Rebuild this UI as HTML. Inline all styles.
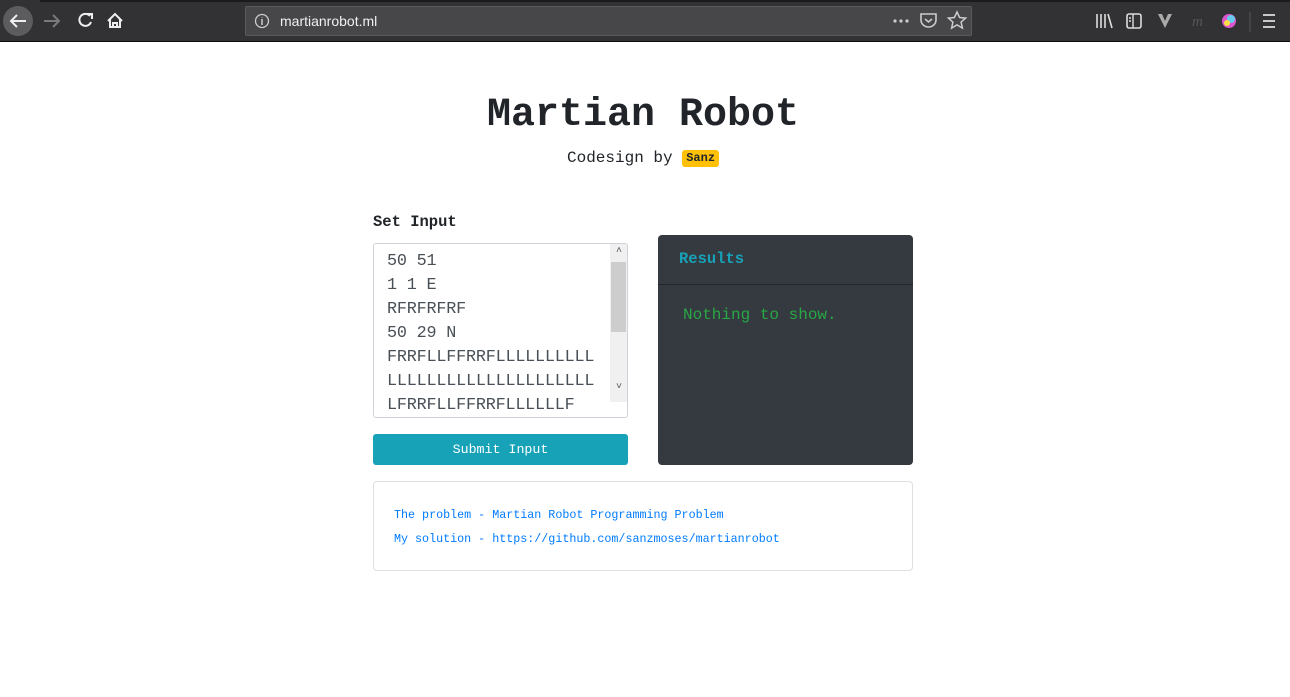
<!DOCTYPE html>
<html><head><meta charset="utf-8"><style>
*{box-sizing:border-box;margin:0;padding:0}
body{width:1290px;height:697px;overflow:hidden;background:#fff;font-family:"Liberation Mono",monospace;position:relative}
.bar{position:absolute;left:0;top:0;width:1290px;height:42px;background:#323234;border-bottom:1px solid #0c0c0d}
.tabline{position:absolute;top:0;height:2px;background:#1b1b1c}
.url{position:absolute;left:245px;top:6px;width:727px;height:30px;background:#474749;border:1px solid #5a5a5c;border-radius:2px;color:#f0f0f0;font-family:"Liberation Sans",sans-serif;font-size:14px;line-height:28px;padding-left:34px}
.ic{position:absolute}
.a{position:absolute;white-space:pre}
</style></head><body>
<div class="bar">
 <div class="tabline" style="left:40px;width:1250px"></div>
 <svg class="ic" style="left:0;top:0" width="300" height="42">
  <circle cx="18" cy="21" r="15" fill="#5c5c5e"/>
  <path d="M26 21H11M17 15l-6 6 6 6" stroke="#eee" stroke-width="2" fill="none"/>
  <path d="M59 21H44M53 15l6 6-6 6" stroke="#7a7a7c" stroke-width="2" fill="none"/>
  <path d="M90 16a6 6 0 1 0 1 6" stroke="#eee" stroke-width="2" fill="none"/><path d="M86 14h6v5" stroke="#eee" stroke-width="2" fill="none"/>
  <path d="M108 21l7-7 7 7M110 19v8h10v-8M113 27v-4h4v4" stroke="#eee" stroke-width="2" fill="none"/>
 </svg>
 <div class="url">martianrobot.ml</div>
 <svg class="ic" style="left:0;top:0" width="1290" height="42">
  <circle cx="262" cy="21" r="6.5" stroke="#ccc" stroke-width="1.3" fill="none"/><path d="M262 19v6M262 17v.5" stroke="#ccc" stroke-width="1.5"/>
  <circle cx="895" cy="21" r="1.6" fill="#ccc"/><circle cx="901" cy="21" r="1.6" fill="#ccc"/><circle cx="907" cy="21" r="1.6" fill="#ccc"/>
  <path d="M921 14h15v6a7.5 7 0 0 1-15 0z" stroke="#ccc" stroke-width="1.6" fill="none"/><path d="M925 19l3.5 3 3.5-3" stroke="#ccc" stroke-width="1.6" fill="none"/>
  <path d="M957 12l2.6 5.5 6 .6-4.5 4 1.3 6-5.4-3.2-5.4 3.2 1.3-6-4.5-4 6-.6z" stroke="#ccc" stroke-width="1.5" fill="none"/>
  <path d="M1097 14v14M1101 14v14M1105 14v14M1108 14l4 14" stroke="#ddd" stroke-width="1.6"/>
  <rect x="1127" y="14" width="14" height="14" rx="2" stroke="#ddd" stroke-width="1.6" fill="none"/><path d="M1133 14v14M1129 18h2M1129 21h2" stroke="#ddd" stroke-width="1.4"/>
  <path d="M1158 14l7 14 7-14h-4l-3 7-3-7z" fill="#aaa"/>
  <text x="1192" y="26" font-family="Liberation Serif" font-style="italic" font-size="15" fill="#555">m</text>
  <circle cx="1229" cy="21" r="7" fill="#d5c"/><circle cx="1231" cy="19" r="4" fill="#6ce"/><circle cx="1227" cy="23" r="3" fill="#fd4"/>
  <path d="M1250 12v20" stroke="#555" stroke-width="1"/>
  <path d="M1263 15h12M1263 21h12M1263 27h12" stroke="#ddd" stroke-width="1.8"/>
 </svg>
</div>
<div class="a" style="left:0;width:1286px;top:93px;text-align:center;font-size:40px;font-weight:bold;color:#212529;line-height:46px">Martian Robot</div>
<div class="a" style="left:567px;top:148px;font-size:16px;color:#212529;line-height:20px">Codesign by <span style="display:inline-block;background:#ffc107;border-radius:3px;font-size:12px;font-weight:bold;padding:0 4px;line-height:17px;vertical-align:1px">Sanz</span></div>
<div class="a" style="left:373px;top:213px;font-size:15.5px;font-weight:bold;color:#212529">Set Input</div>
<div style="position:absolute;left:373px;top:243px;width:255px;height:175px;border:1px solid #ced4da;border-radius:3px;overflow:hidden">
 <div style="position:absolute;left:13px;top:6px;font-size:16.8px;line-height:24px;color:#495057;white-space:pre;letter-spacing:-.2px">50 51
1 1 E
RFRFRFRF
50 29 N
FRRFLLFFRRFLLLLLLLLLL
LLLLLLLLLLLLLLLLLLLLL
LFRRFLLFFRRFLLLLLLF</div>
 <div style="position:absolute;right:0;top:0;width:17px;height:158px;background:#f0f0f0"></div>
 <div style="position:absolute;right:1px;top:18px;width:15px;height:70px;background:#cdcdcd"></div>
 <div style="position:absolute;right:5px;top:2px;font-size:10px;color:#555">&#708;</div>
 <div style="position:absolute;right:5px;top:138px;font-size:10px;color:#555">&#709;</div>
</div>
<div style="position:absolute;left:373px;top:434px;width:255px;height:31px;background:#17a2b8;border-radius:3px;color:#fff;font-size:13.3px;text-align:center;line-height:31px">Submit Input</div>
<div style="position:absolute;left:658px;top:235px;width:255px;height:230px;background:#343a40;border-radius:4px">
 <div style="height:50px;border-bottom:1px solid #23272b;color:#17a2b8;font-weight:bold;font-size:15.5px;padding:15px 0 0 21px">Results</div>
 <div style="color:#28a745;font-size:16px;padding:21px 0 0 25px">Nothing to show.</div>
</div>
<div style="position:absolute;left:373px;top:481px;width:540px;height:90px;border:1px solid #dfdfdf;border-radius:4px;color:#007bff;font-size:11.7px;line-height:24px;padding:21px 0 0 20px">
 <div>The problem - Martian Robot Programming Problem</div>
 <div>My solution - https://github.com/sanzmoses/martianrobot</div>
</div>
</body></html>
